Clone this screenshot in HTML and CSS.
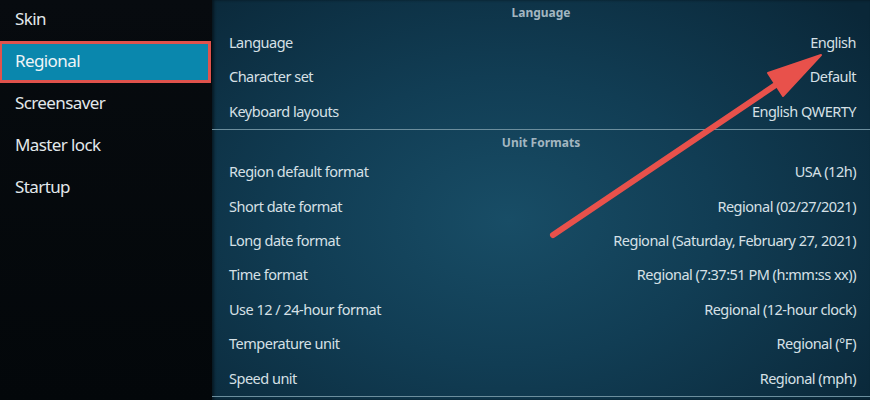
FILE: index.html
```html
<!DOCTYPE html>
<html>
    <head>
        <meta charset="utf-8">
        <title>Settings - Regional</title>
        <link rel="stylesheet" href="styles.css">
    </head>
    <body>
    <div class="screen">
        <nav class="sidebar">
            <div class="nav-item">Skin</div>
            <div class="nav-item active">Regional</div>
            <div class="nav-item">Screensaver</div>
            <div class="nav-item">Master lock</div>
            <div class="nav-item">Startup</div>
        </nav>

        <main class="panel">
            <div class="group-title">Language</div>
            <div class="row"><span>Language</span><span>English</span></div>
            <div class="row"><span>Character set</span><span>Default</span></div>
            <div class="row"><span>Keyboard layouts</span><span>English QWERTY</span></div>

            <div class="group-title divided">Unit Formats</div>
            <div class="row"><span>Region default format</span><span>USA (12h)</span></div>
            <div class="row"><span>Short date format</span><span>Regional (02/27/2021)</span></div>
            <div class="row"><span>Long date format</span><span>Regional (Saturday, February 27, 2021)</span></div>
            <div class="row"><span>Time format</span><span>Regional (7:37:51 PM (h:mm:ss xx))</span></div>
            <div class="row"><span>Use 12 / 24-hour format</span><span>Regional (12-hour clock)</span></div>
            <div class="row"><span>Temperature unit</span><span>Regional (°F)</span></div>
            <div class="row last"><span>Speed unit</span><span>Regional (mph)</span></div>
        </main>

        <!-- annotation arrow drawn over the screenshot -->
        <svg class="arrow" width="870" height="400" viewBox="0 0 870 400">
            <line x1="553" y1="235" x2="786" y2="78" stroke="#e8514b" stroke-width="6" stroke-linecap="round"/>
            <polygon points="821,55 768,73 783,96" fill="#e8514b" stroke="#e8514b" stroke-width="2" stroke-linejoin="round"/>
        </svg>
    </div>
    </body>
</html>
```

FILE: styles.css
```css
body, html {
    margin: 0;
    padding: 0;
    background: #05090c;
    font-family: "Noto Sans", "Open Sans", sans-serif;
}
.screen {
    position: relative;
    display: flex;
    width: 870px;
    height: 400px;
    overflow: hidden;
}
.sidebar {
    width: 212px;
    flex: none;
    background: linear-gradient(to bottom, #070b0f 0%, #03070a 100%);
}
.nav-item {
    height: 42px;
    line-height: 38px;
    padding-left: 15px;
    color: #e2e8eb;
    font-size: 17px;
    letter-spacing: -0.6px;
    box-sizing: border-box;
}
.nav-item.active {
    background: #0a87ad;
    border: solid 3px #e0524c;
    border-left-width: 2px;
    width: 211px;
    padding-left: 13px;
    line-height: 34px;
    margin-top: -1px;
    margin-bottom: 1px;
    color: #eef4f7;
}
.panel {
    flex: 1;
    background: radial-gradient(ellipse 70% 80% at 45% 55%, #184d66 0%, #113d54 45%, #0a2738 100%);
    box-shadow: inset 2px 0 3px rgba(0, 0, 0, .5);
}
.group-title {
    height: 26px;
    line-height: 26px;
    text-align: center;
    font-size: 12px;
    font-weight: bold;
    color: #a3b6c0;
}
.group-title.divided {
    height: 25px;
    border-top: solid 1px #6c8e9d;
}
.row {
    display: flex;
    justify-content: space-between;
    height: 34.4px;
    line-height: 33px;
    padding: 0 14px 0 17px;
    font-size: 14.5px;
    letter-spacing: -0.5px;
    color: #d6e0e6;
}
.row.last {
    border-bottom: solid 1px #6c8e9d;
}
.arrow {
    position: absolute;
    left: 0;
    top: 0;
}
```
